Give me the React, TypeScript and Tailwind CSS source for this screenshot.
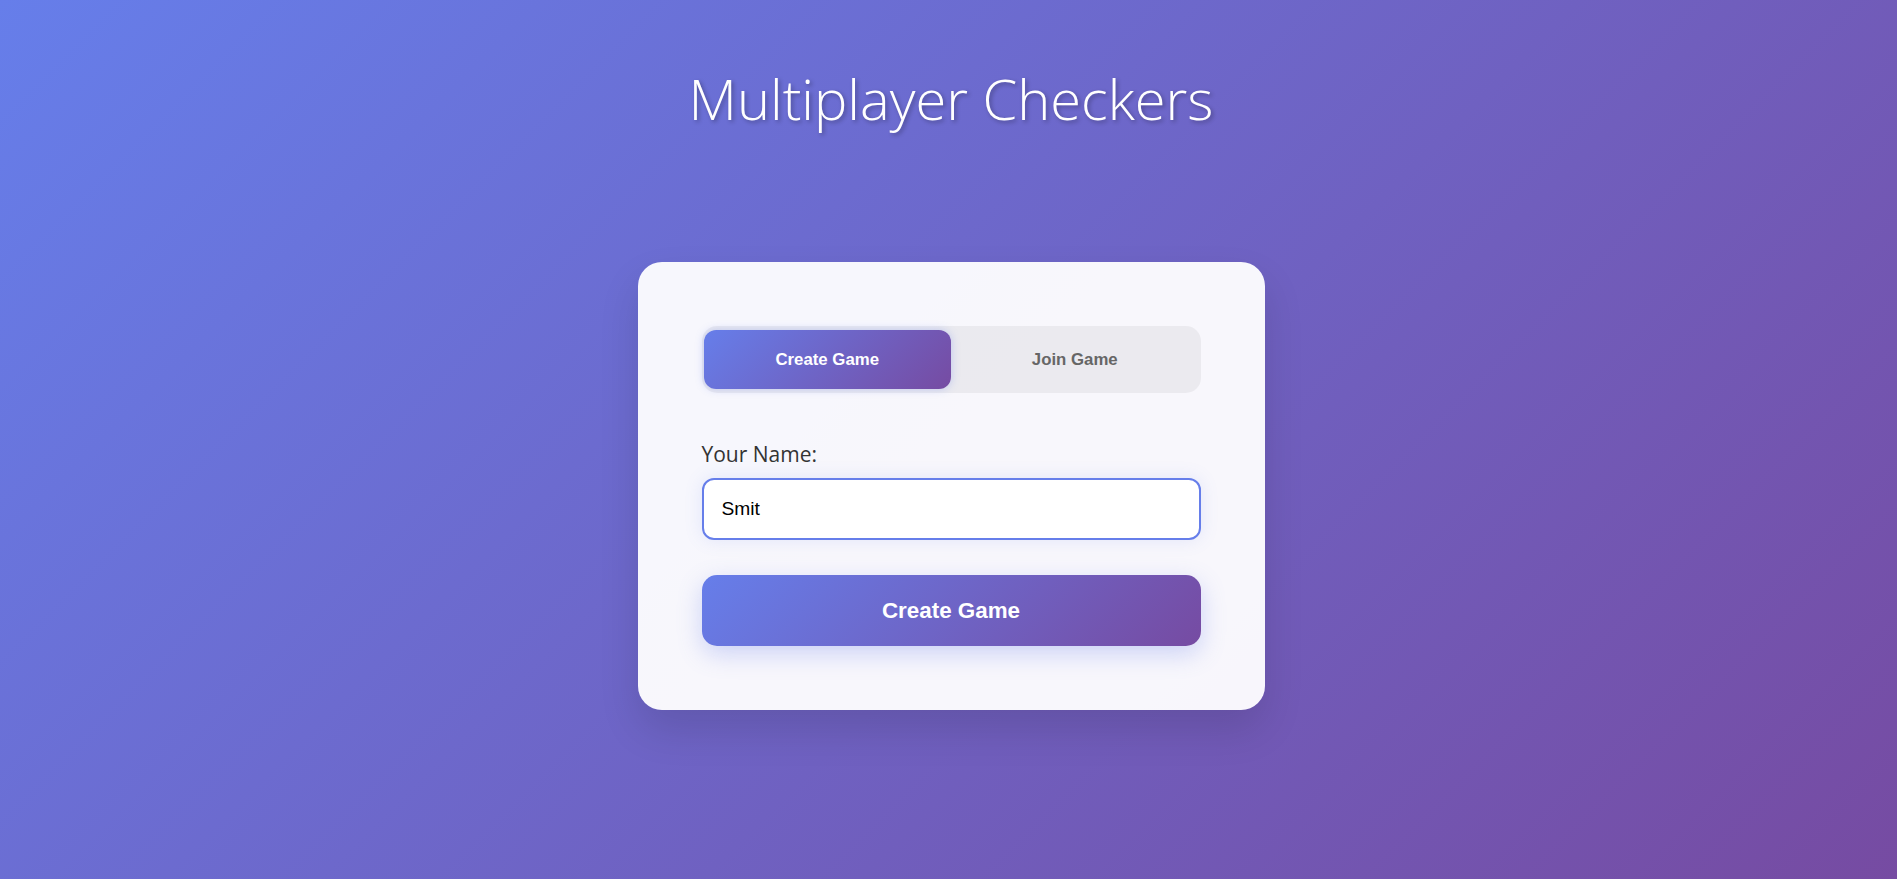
import React, { useState } from 'react';

type Mode = 'create' | 'join';

export default function App() {
  const [mode, setMode] = useState<Mode>('create');
  const [name, setName] = useState('Smit');

  const tabBase =
    "flex-1 h-full rounded-[12px] text-[16.8px] font-bold font-['Liberation_Sans',Arial,sans-serif] transition-all";

  return (
    <div className="min-h-screen w-full bg-[linear-gradient(135deg,#667eea_0%,#764ba2_100%)] flex flex-col items-center pt-[60px] pl-[5px]">
      <h1 className="font-['Open_Sans','Noto_Sans',sans-serif] font-light text-[56px] leading-[76px] text-white [text-shadow:2px_2px_4px_rgba(0,0,0,0.3)]">
        Multiplayer Checkers
      </h1>

      <div className="mt-[126px] w-[627px] rounded-[24px] bg-white/95 px-16 py-16 shadow-[0_20px_40px_rgba(0,0,0,0.12)]">
        <div className="flex h-[67px] rounded-[15px] bg-black/5 px-[2px] py-1">
          <button
            onClick={() => setMode('create')}
            className={
              mode === 'create'
                ? `${tabBase} text-white bg-[linear-gradient(135deg,#667eea_0%,#764ba2_100%)] shadow-[0_0_8px_rgba(102,126,234,0.35)]`
                : `${tabBase} text-[#666]`
            }
          >
            Create Game
          </button>
          <button
            onClick={() => setMode('join')}
            className={
              mode === 'join'
                ? `${tabBase} text-white bg-[linear-gradient(135deg,#667eea_0%,#764ba2_100%)] shadow-[0_0_8px_rgba(102,126,234,0.35)]`
                : `${tabBase} text-[#666]`
            }
          >
            Join Game
          </button>
        </div>

        <label className="mt-[47px] mb-[10px] block font-['Open_Sans','Noto_Sans',sans-serif] font-medium text-[21px] leading-[28px] text-[#333]">
          Your Name:
        </label>
        <input
          value={name}
          onChange={(e) => setName(e.target.value)}
          className="block w-full h-[62px] rounded-[12px] border-2 border-[#667eea] bg-white px-[18px] text-[19.2px] text-black font-['Liberation_Sans',Arial,sans-serif] outline-none shadow-[0_0_18px_rgba(102,126,234,0.15)]"
        />

        <button className="mt-[35px] w-full h-[71px] rounded-[15px] bg-[linear-gradient(135deg,#667eea_0%,#764ba2_100%)] text-white text-[22.4px] font-bold font-['Liberation_Sans',Arial,sans-serif] shadow-[0_8px_25px_rgba(102,126,234,0.3)]">
          {mode === 'create' ? 'Create Game' : 'Join Game'}
        </button>
      </div>
    </div>
  );
}
